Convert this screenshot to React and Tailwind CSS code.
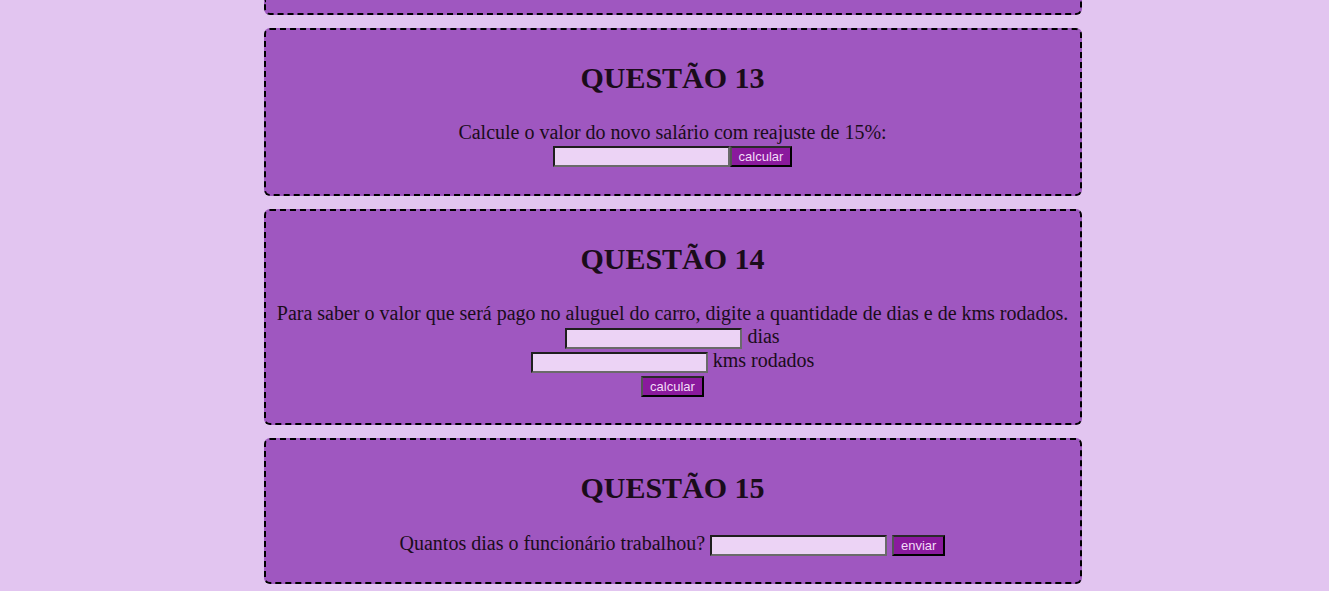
export default function App() {
  const serif = { fontFamily: '"Liberation Serif", "Times New Roman", serif' };
  const card =
    "w-[818px] border-2 border-dashed border-black rounded-[6px] bg-[#9f57c0] px-[4px] py-[4px] text-center text-[#1a0c1a]";
  const h = "text-[30px] font-bold leading-[34px] mt-[27px] mb-[26px]";
  const input =
    "inline-block align-middle w-[177px] h-[21px] bg-[#ecd3f5] border-2 border-t-[#1e1e1e] border-l-[#1e1e1e] border-r-[#6a6a6a] border-b-[#6a6a6a] outline-none";
  const button =
    "inline-block align-middle h-[21px] px-[7px] bg-[#8a1a9d] text-[#f3dcf8] text-[13px] leading-[15px] border-2 border-t-[#2a2a2a] border-l-[#555] border-r-black border-b-black";
  const btnFont = { fontFamily: 'Arial, "Liberation Sans", sans-serif' };

  return (
    <div className="min-h-[591px] bg-[#e2c5f0] pl-[16px] flex flex-col items-center gap-[13px]" style={serif}>
      <div className="w-[818px] h-[15px] border-2 border-t-0 border-dashed border-black rounded-b-[6px] bg-[#9f57c0]" />

      <div className={card}>
        <h2 className={h}>QUESTÃO 13</h2>
        <div className="text-[20px] leading-[23px] mb-[22px]">
          Calcule o valor do novo salário com reajuste de 15%:
          <br />
          <span className="inline-flex mt-[2px]">
            <input className={input} />
            <button className={button} style={btnFont}>calcular</button>
          </span>
        </div>
      </div>

      <div className={card}>
        <h2 className={h}>QUESTÃO 14</h2>
        <div className="text-[20px] leading-[23px] mb-[22px]">
          Para saber o valor que será pago no aluguel do carro, digite a quantidade de dias e de kms rodados.
          <br />
          <input className={input} /> dias
          <br />
          <input className={input} /> kms rodados
          <br />
          <button className={button} style={btnFont}>calcular</button>
        </div>
      </div>

      <div className={card}>
        <h2 className={h}>QUESTÃO 15</h2>
        <div className="text-[20px] leading-[24px] mb-[22px]">
          Quantos dias o funcionário trabalhou? <input className={input} />{" "}
          <button className={button} style={btnFont}>enviar</button>
        </div>
      </div>
    </div>
  );
}
